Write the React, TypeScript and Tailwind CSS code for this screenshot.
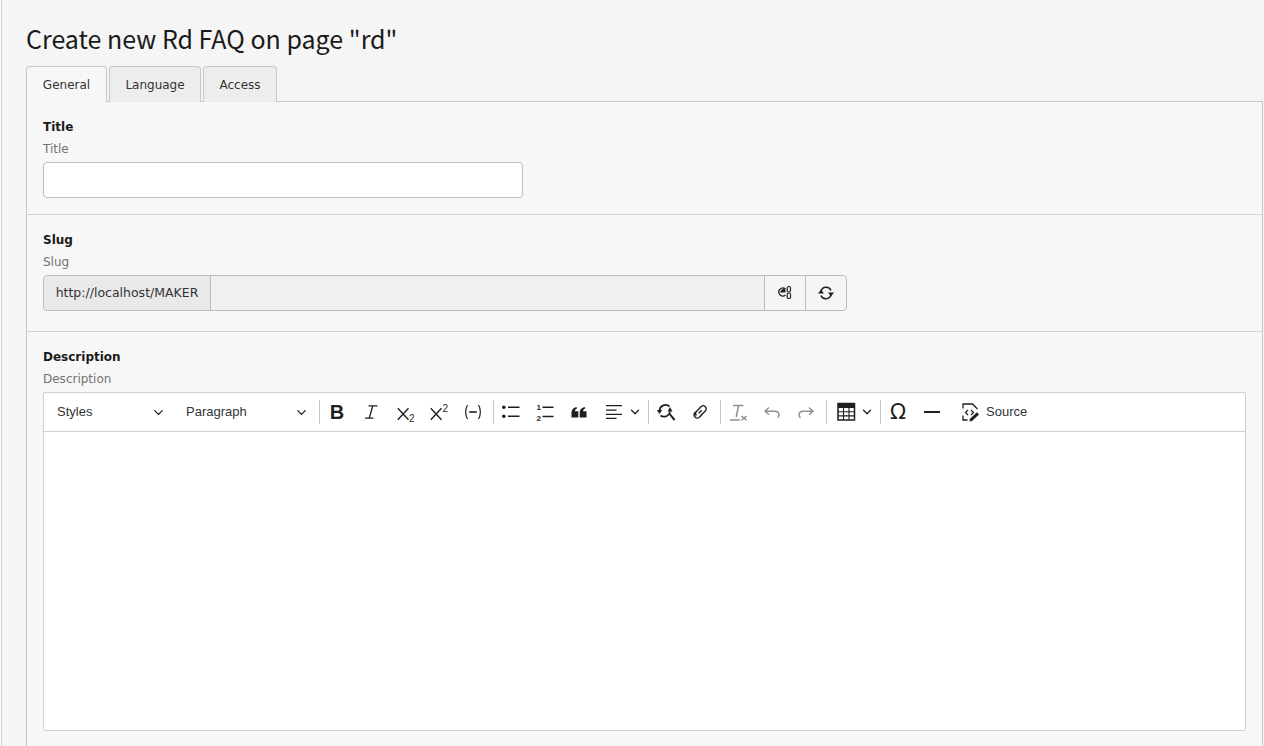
import { ChevronDown } from 'lucide-react';
import type { ReactNode } from 'react';

const sans = 'font-["DejaVu_Sans",sans-serif]';

function Tab({ label, active, width }: { label: string; active?: boolean; width: string }) {
  return (
    <div
      className={`${width} flex h-[36px] items-center justify-center rounded-t-[4px] border border-b-0 border-[#c8c8c8] text-[12px] text-[#333] ${
        active ? 'relative z-10 bg-[#f7f7f7]' : 'bg-[#ededed]'
      }`}
    >
      {label}
    </div>
  );
}

function Section({ label, pb, children }: { label: string; pb: string; children: ReactNode }) {
  return (
    <div className={`px-[16px] pt-[16px] ${pb}`}>
      <div className="h-[18px] text-[12px] font-bold leading-[18px] text-[#1a1a1a]">{label}</div>
      <div className="mb-[4px] mt-[4px] h-[18px] text-[12px] leading-[18px] text-[#737373]">{label}</div>
      {children}
    </div>
  );
}

function Sep() {
  return <div className="ml-[3px] h-[24px] w-px shrink-0 bg-[#c8c8c8]" />;
}

function Btn({ children }: { children: ReactNode }) {
  return <div className="flex h-[26px] w-[34px] shrink-0 items-center justify-center">{children}</div>;
}

function Ico({ children, muted }: { children: ReactNode; muted?: boolean }) {
  return (
    <svg viewBox="0 0 20 20" className={`h-[20px] w-[20px] shrink-0 ${muted ? 'text-[#8f8f8f]' : 'text-[#1f1f1f]'}`} fill="currentColor">
      {children}
    </svg>
  );
}

function Drop({ label, width, pr }: { label: string; width: string; pr: string }) {
  return (
    <div className={`${width} ${pr} flex h-[26px] shrink-0 items-center justify-between pl-[13px] text-[13px] text-[#333]`}>
      <span>{label}</span>
      <ChevronDown size={15} strokeWidth={2.2} className="text-[#222]" />
    </div>
  );
}

function Toolbar() {
  return (
    <div className='flex h-[39px] items-center border-b border-[#d0d0d0] font-["Liberation_Sans",sans-serif]'>
      <Drop label="Styles" width="w-[125px]" pr="pr-[3px]" />
      <div className="w-[4px] shrink-0" />
      <Drop label="Paragraph" width="w-[143px]" pr="pr-[7px]" />
      <Sep />
      <Btn>
        <span className="text-[20px] font-bold leading-none text-[#1f1f1f]">B</span>
      </Btn>
      <Btn>
        <Ico>
          <path d="M7.500 3.800h9M4 16.200h8.500M11.800 3.800 8.200 16.200" fill="none" stroke="currentColor" strokeWidth="1.300" />
        </Ico>
      </Btn>
      <Btn>
        <Ico>
          <path d="M2.800 6.300 13.500 17.700M13.500 6.300 2.800 17.700" fill="none" stroke="currentColor" strokeWidth="1.400" />
          <text x="14" y="19.500" fontSize="10" fontFamily="Liberation Sans">2</text>
        </Ico>
      </Btn>
      <Btn>
        <Ico>
          <path d="M1.800 6.300 12.500 17.700M12.500 6.300 1.800 17.700" fill="none" stroke="currentColor" strokeWidth="1.400" />
          <text x="13.500" y="9.500" fontSize="10" fontFamily="Liberation Sans">2</text>
        </Ico>
      </Btn>
      <Btn>
        <Ico>
          <path d="M4.500 3C2 7 2 13 4.500 17M15.500 3C18 7 18 13 15.500 17" fill="none" stroke="currentColor" strokeWidth="1.200" />
          <path d="M6.200 9.200h7.600v1.600H6.200z" />
        </Ico>
      </Btn>
      <Sep />
      <Btn>
        <Ico>
          <circle cx="2.800" cy="5.300" r="1.800" />
          <circle cx="2.800" cy="14.300" r="1.800" />
          <path d="M7 4.600h11.500v1.400H7zM7 13.600h11.500V15H7z" />
        </Ico>
      </Btn>
      <Btn>
        <Ico>
          <path d="M7.500 4.600H18.500V6H7.500zM7.500 13.800H18.500v1.400H7.500z" />
          <text x="1.500" y="8" fontSize="8" fontWeight="700" fontFamily="Liberation Sans">1</text>
          <text x="1.500" y="18.500" fontSize="8" fontWeight="700" fontFamily="Liberation Sans">2</text>
        </Ico>
      </Btn>
      <Btn>
        <Ico>
          <path d="M2.500 15.500V10.500C2.500 7.800 4.300 5.800 7.500 5l.5 1.400C6.500 7 5.800 8 5.800 9.200H9.300v6.300zM10.700 15.500V10.500c0-2.700 1.800-4.700 5-5.500l.5 1.400c-1.500.6-2.200 1.600-2.200 2.800h3.500v6.300z" />
        </Ico>
      </Btn>
      <div className="flex h-[26px] w-[49px] shrink-0 items-center pl-[7px]">
        <Ico>
          <path d="M3 3h16v1.300H3zM3 7.400h10.500v1.300H3zM3 11.700h16V13H3zM3 15.700h10.500V17H3z" />
        </Ico>
        <ChevronDown size={14} strokeWidth={2.2} className="ml-[5px] shrink-0 text-[#222]" />
      </div>
      <Sep />
      <Btn>
        <Ico>
          <path d="M3.500 8.500A6 6 0 0 1 13.500 4.500M14 9.500a6 6 0 0 1-9.500 4" fill="none" stroke="currentColor" strokeWidth="1.700" />
          <path d="M0.800 8h5.400L3.500 12zM11.500 9.500h5L14 5zM13 12.500l1.300-1.200 5 6-1.600 1.400z" />
        </Ico>
      </Btn>
      <Btn>
        <Ico>
          <path
            d="M6.400 13.600a3 3 0 0 1 0-4.200L11 4.700a3 3 0 0 1 4.300 4.300l-4.600 4.600M5.500 9.900 4.700 11a3.200 3.200 0 0 0 4.400 4.500L12 12.500M8.700 11.300l3-3"
            fill="none"
            stroke="currentColor"
            strokeWidth="1.400"
          />
        </Ico>
      </Btn>
      <Sep />
      <Btn>
        <Ico muted>
          <path d="M5 3.400h10.500M10.600 3.400 8.200 15M2 18h10" fill="none" stroke="currentColor" strokeWidth="1.500" />
          <path d="M13.500 14l5 4.300M18.500 14l-5 4.300" fill="none" stroke="currentColor" strokeWidth="1.500" />
        </Ico>
      </Btn>
      <Btn>
        <Ico muted>
          <path d="M7 5.500 3 9.200l4 3.600M3 9.200h10a4 4 0 0 1 4 3.500c0 1.200-.5 2.200-1.500 3" fill="none" stroke="currentColor" strokeWidth="1.400" />
        </Ico>
      </Btn>
      <Btn>
        <Ico muted>
          <path d="M13 5.500l4 3.700-4 3.600M17 9.200H7a4 4 0 0 0-4 3.500c0 1.200.5 2.200 1.500 3" fill="none" stroke="currentColor" strokeWidth="1.400" />
        </Ico>
      </Btn>
      <Sep />
      <div className="flex h-[26px] w-[50px] shrink-0 items-center pl-[9px]">
        <Ico>
          <path d="M2 1.500h16.500V18H2z" fill="none" stroke="currentColor" strokeWidth="1.500" />
          <path d="M2 1.500h16.500V6H2z" />
          <path d="M7.500 6v12M13 6v12M2 9.800h16.500M2 13.900h16.500" fill="none" stroke="currentColor" strokeWidth="1.100" />
        </Ico>
        <ChevronDown size={14} strokeWidth={2.2} className="ml-[4px] shrink-0 text-[#222]" />
      </div>
      <Sep />
      <Btn>
        <span className='font-["DejaVu_Sans",sans-serif] text-[21px] leading-none text-[#1f1f1f]'>Ω</span>
      </Btn>
      <Btn>
        <Ico>
          <path d="M2 9h16v2H2z" />
        </Ico>
      </Btn>
      <div className="flex h-[26px] items-center pl-[11px] text-[13px] text-[#333]">
        <Ico>
          <path d="M3 6.500V2h9.500l5 5M3 13.500V18h4.500" fill="none" stroke="currentColor" strokeWidth="1.300" />
          <path d="M8 8 5.500 10.500 8 13M11 8l2.500 2.500L11 13" fill="none" stroke="currentColor" strokeWidth="1.200" />
          <path d="M9.500 19.500l.5-2.800 7-6.500 2 2.200-7 6.500z" />
        </Ico>
        <span className="ml-[6px]">Source</span>
      </div>
    </div>
  );
}

export default function App() {
  return (
    <div className={`${sans} ml-px h-[746px] overflow-hidden border-l border-[#cfcfcf] bg-[#f5f5f5] pl-[24px] pr-px pt-[23px]`}>
      <h1 className='h-[33px] font-["Noto_Sans_CJK_SC",sans-serif] text-[25px] leading-[31px] text-[#1a1a1a]'>
        Create new Rd FAQ on page "rd"
      </h1>
      <div className="mt-[10px] flex gap-[2px]">
        <Tab label="General" active width="w-[81px]" />
        <Tab label="Language" width="w-[92px]" />
        <Tab label="Access" width="w-[74px]" />
      </div>
      <div className="-mt-px h-[700px] border border-[#c8c8c8] bg-[#f7f7f7]">
        <Section label="Title" pb="border-b border-[#d4d4d4] pb-[16px]">
          <div className="h-[36px] w-[480px] rounded-[4px] border border-[#bbb] bg-white" />
        </Section>
        <Section label="Slug" pb="border-b border-[#d4d4d4] pb-[20px]">
          <div className="flex h-[36px] w-[804px] rounded-[4px] border border-[#bbb] bg-[#f0f0f0] text-[12.5px] text-[#333]">
            <div className="flex w-[167px] items-center justify-center rounded-l-[4px] border-r border-[#bbb] bg-[#e9e9e9]">
              http://localhost/MAKER
            </div>
            <div className="flex-1" />
            <div className="flex w-[41px] items-center justify-center border-l border-[#bbb] bg-[#f5f5f5]">
              <svg viewBox="0 0 16 16" className="h-[16px] w-[16px] text-[#222]" fill="none" stroke="currentColor">
                <path d="M8.500 4A4 4 0 1 0 8.500 10" strokeWidth="1.200" />
                <path d="M6 3.500 2.500 7.500h6v-3z" fill="currentColor" stroke="none" />
                <rect x="10.200" y="1.500" width="3.300" height="5.500" rx="1.600" strokeWidth="1.200" />
                <rect x="10.200" y="8" width="3.300" height="5.500" rx="1.600" strokeWidth="1.200" />
              </svg>
            </div>
            <div className="flex w-[41px] items-center justify-center rounded-r-[4px] border-l border-[#bbb] bg-[#f5f5f5]">
              <svg viewBox="0 0 16 16" className="h-[16px] w-[16px] text-[#222]" fill="none" stroke="currentColor" strokeWidth="1.500">
                <path d="M3 7A5.200 5.200 0 0 1 13 5.500M13 9A5.200 5.200 0 0 1 3 10.500" />
                <path d="M0 8.500h6L3 4.500zM10 7.500h6L13 11.500z" fill="currentColor" stroke="none" />
              </svg>
            </div>
          </div>
        </Section>
        <Section label="Description" pb="pb-0">
          <div className="h-[339px] w-[1203px] rounded-[2px] border border-[#d0d0d0] bg-white">
            <Toolbar />
          </div>
        </Section>
      </div>
    </div>
  );
}
